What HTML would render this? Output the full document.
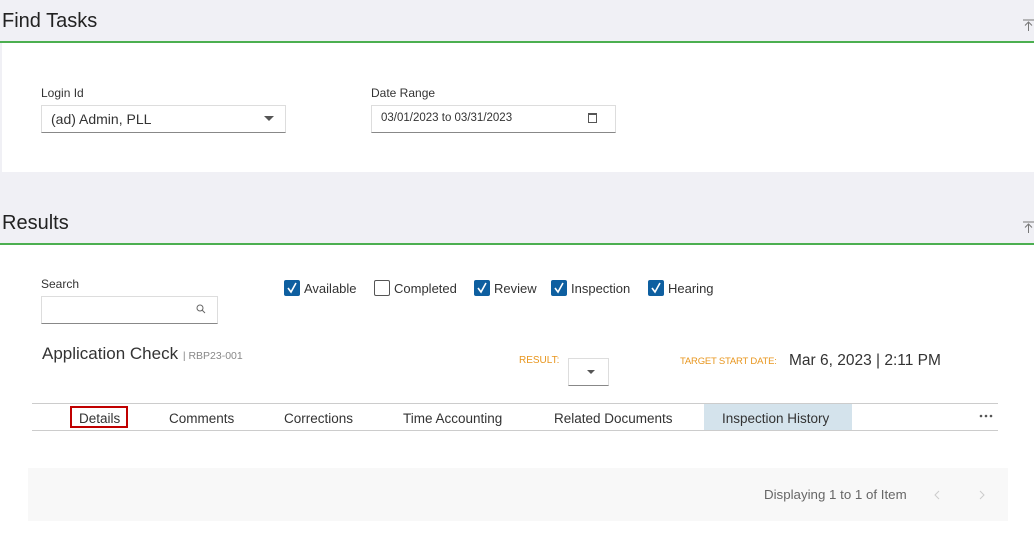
<!DOCTYPE html>
<html><head><style>
*{margin:0;padding:0;box-sizing:border-box}
body{width:1034px;height:542px;position:relative;background:#fff;font-family:"Liberation Sans",sans-serif;color:#333;overflow:hidden}
.a{position:absolute;white-space:nowrap}
.band{position:absolute;left:0;width:1034px;background:#f0f0f5}
.green{position:absolute;left:0;width:1034px;height:2px;background:#4caf50}
.cb{position:absolute;width:16px;height:16px;border-radius:2px;background:#0e5fa0;top:280px}
.cb svg{position:absolute;left:1px;top:1px}
.cbo{background:#fff;border:1.5px solid #555}
.lbl{font-size:13px;color:#333}
.tab{position:absolute;top:411px;font-size:13.5px;color:#333}
</style></head><body>
<div class="band" style="top:0;height:41px"></div>
<div class="green" style="top:41px"></div>
<div class="a" style="left:2px;top:10px;font-size:20px;color:#222">Find Tasks</div>
<svg class="a" style="left:1023px;top:19px" width="11" height="12"><path d="M0 1 H11 M5.5 3 V12 M2 6.5 L5.5 3 L9 6.5" stroke="#777" stroke-width="1" fill="none"/></svg>
<div class="a" style="left:0;top:43px;width:2px;height:129px;background:#f0f0f5"></div>

<div class="a lbl" style="left:41px;top:86px;font-size:12px">Login Id</div>
<div class="a" style="left:41px;top:105px;width:245px;height:28px;border:1px solid #ddd;border-bottom:1px solid #888;"></div>
<div class="a" style="left:51px;top:111px;font-size:14px;color:#333">(ad) Admin, PLL</div>
<div class="a" style="left:264px;top:116px;width:0;height:0;border-left:5px solid transparent;border-right:5px solid transparent;border-top:5px solid #555"></div>

<div class="a lbl" style="left:371px;top:86px;font-size:12px">Date Range</div>
<div class="a" style="left:371px;top:105px;width:245px;height:28px;border:1px solid #ddd;border-bottom:1px solid #888;"></div>
<div class="a" style="left:381px;top:112px;font-size:11.5px;color:#333">03/01/2023 to 03/31/2023</div>
<div class="a" style="left:588px;top:113px;width:9px;height:10px;border:1px solid #555;border-top:2px solid #555"></div>

<div class="band" style="top:172px;height:71px"></div>
<div class="green" style="top:243px"></div>
<div class="a" style="left:2px;top:212px;font-size:20px;color:#222">Results</div>
<svg class="a" style="left:1023px;top:221px" width="11" height="12"><path d="M0 1 H11 M5.5 3 V12 M2 6.5 L5.5 3 L9 6.5" stroke="#777" stroke-width="1" fill="none"/></svg>

<div class="a lbl" style="left:41px;top:277px;font-size:12px">Search</div>
<div class="a" style="left:41px;top:296px;width:177px;height:28px;border:1px solid #ddd;border-bottom:1px solid #888"></div>
<svg class="a" style="left:196px;top:304px" width="10" height="10"><circle cx="4" cy="4" r="3" stroke="#666" fill="none"/><path d="M6 6 L9 9" stroke="#666"/></svg>

<div class="cb" style="left:284px"><svg width="14" height="14"><path d="M3 7 L6 11 L11 2" stroke="#fff" stroke-width="1.6" fill="none"/></svg></div>
<div class="a lbl" style="left:304px;top:281px">Available</div>
<div class="cb cbo" style="left:374px"></div>
<div class="a lbl" style="left:394px;top:281px">Completed</div>
<div class="cb" style="left:474px"><svg width="14" height="14"><path d="M3 7 L6 11 L11 2" stroke="#fff" stroke-width="1.6" fill="none"/></svg></div>
<div class="a lbl" style="left:494px;top:281px">Review</div>
<div class="cb" style="left:551px"><svg width="14" height="14"><path d="M3 7 L6 11 L11 2" stroke="#fff" stroke-width="1.6" fill="none"/></svg></div>
<div class="a lbl" style="left:571px;top:281px">Inspection</div>
<div class="cb" style="left:648px"><svg width="14" height="14"><path d="M3 7 L6 11 L11 2" stroke="#fff" stroke-width="1.6" fill="none"/></svg></div>
<div class="a lbl" style="left:668px;top:281px">Hearing</div>

<div class="a" style="left:42px;top:344px;font-size:17px;color:#333">Application Check <span style="font-size:10.5px;color:#888">| RBP23-001</span></div>
<div class="a" style="left:519px;top:355px;font-size:10px;color:#e8961e">RESULT:</div>
<div class="a" style="left:568px;top:358px;width:41px;height:28px;border:1px solid #ddd;border-bottom:1px solid #888"></div>
<div class="a" style="left:587px;top:370px;width:0;height:0;border-left:4px solid transparent;border-right:4px solid transparent;border-top:4px solid #555"></div>
<div class="a" style="left:680px;top:356px;font-size:9.5px;color:#e8961e;letter-spacing:-0.2px">TARGET START DATE:</div>
<div class="a" style="left:789px;top:352px;font-size:15.5px;color:#333">Mar 6, 2023 | 2:11 PM</div>

<div class="a" style="left:32px;top:403px;width:966px;height:1px;background:#ccc"></div>
<div class="a" style="left:32px;top:430px;width:966px;height:1px;background:#ccc"></div>
<div class="a" style="left:704px;top:404px;width:148px;height:26px;background:#d4e3ec"></div>
<div class="a" style="left:70px;top:406px;width:58px;height:22px;border:2px solid #c00000"></div>
<div class="tab" style="left:79px">Details</div>
<div class="tab" style="left:169px">Comments</div>
<div class="tab" style="left:284px">Corrections</div>
<div class="tab" style="left:403px">Time Accounting</div>
<div class="tab" style="left:554px">Related Documents</div>
<div class="tab" style="left:722px">Inspection History</div>
<svg class="a" style="left:979px;top:414px" width="14" height="4"><circle cx="2" cy="2" r="1.3" fill="#555"/><circle cx="7" cy="2" r="1.3" fill="#555"/><circle cx="12" cy="2" r="1.3" fill="#555"/></svg>

<div class="a" style="left:28px;top:468px;width:980px;height:53px;background:#f8f8f8"></div>
<div class="a" style="left:764px;top:487px;font-size:13.3px;color:#666">Displaying 1 to 1 of Item</div>
<svg class="a" style="left:934px;top:490px" width="6" height="10"><path d="M5 1 L1 5 L5 9" stroke="#ccc" fill="none"/></svg>
<svg class="a" style="left:979px;top:490px" width="6" height="10"><path d="M1 1 L5 5 L1 9" stroke="#ccc" fill="none"/></svg>
</body></html>
